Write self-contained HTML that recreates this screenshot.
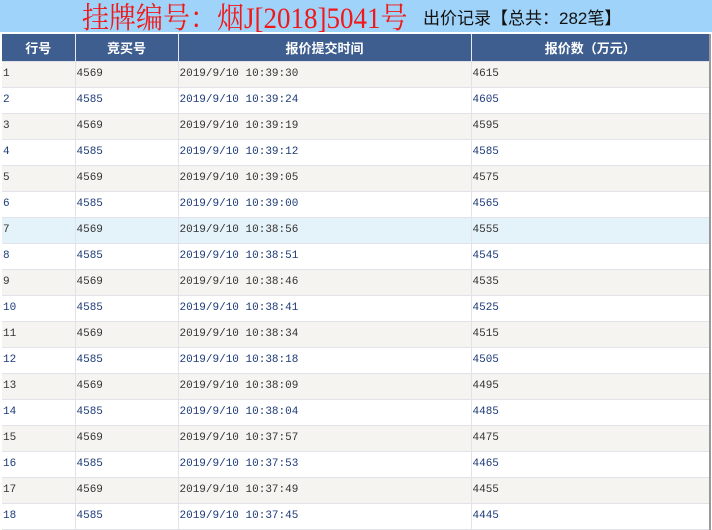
<!DOCTYPE html>
<html><head><meta charset="utf-8"><style>
*{margin:0;padding:0;box-sizing:border-box}
body{width:712px;height:525px;overflow:hidden;background:#fff;font-family:"Liberation Mono","Noto Sans CJK SC",monospace;}
.top{position:absolute;left:0;top:0;width:712px;height:32px;background:#9fd3f9;}
.t1{position:absolute;left:82px;top:1px;font-family:"Liberation Serif","Noto Serif CJK SC",serif;font-size:27px;color:#f01818;line-height:34px;white-space:nowrap;transform:scaleY(1.1);transform-origin:0 50%}
.t2{position:absolute;left:423px;top:8px;font-family:"Liberation Sans","Noto Sans CJK SC",sans-serif;font-size:17px;color:#111;line-height:22px;white-space:nowrap}
table{position:absolute;left:2px;top:34px;width:708px;border-collapse:collapse;table-layout:fixed;border-right:2px solid #999}
th{background:#3d5e8e;color:#fff;font-family:"Liberation Sans","Noto Sans CJK SC",sans-serif;font-size:13px;font-weight:bold;height:27px;border-right:1px solid #e8e8ee;border-bottom:1px solid #e0e0e6}
td{height:26px;font-size:11px;padding-left:1px;border-right:1px solid #e2e2ea;border-bottom:1px solid #e2e2ea;color:#333;white-space:nowrap}
tr.o td{background:#f5f4f0}
tr.e td{background:#fff;color:#1c3a78}
tr.h td{background:#e4f2f9;color:#333}
</style></head><body>
<div class="top"></div>
<div class="t1">挂牌编号：烟J[2018]5041号</div>
<div class="t2">出价记录【总共：282笔】</div>
<table>
<colgroup><col style="width:73px"><col style="width:103px"><col style="width:293px"><col style="width:239px"></colgroup>
<tr><th>行号</th><th>竞买号</th><th>报价提交时间</th><th>报价数（万元）</th></tr>
<tr class="o"><td>1</td><td>4569</td><td>2019/9/10 10:39:30</td><td>4615</td></tr>
<tr class="e"><td>2</td><td>4585</td><td>2019/9/10 10:39:24</td><td>4605</td></tr>
<tr class="o"><td>3</td><td>4569</td><td>2019/9/10 10:39:19</td><td>4595</td></tr>
<tr class="e"><td>4</td><td>4585</td><td>2019/9/10 10:39:12</td><td>4585</td></tr>
<tr class="o"><td>5</td><td>4569</td><td>2019/9/10 10:39:05</td><td>4575</td></tr>
<tr class="e"><td>6</td><td>4585</td><td>2019/9/10 10:39:00</td><td>4565</td></tr>
<tr class="h"><td>7</td><td>4569</td><td>2019/9/10 10:38:56</td><td>4555</td></tr>
<tr class="e"><td>8</td><td>4585</td><td>2019/9/10 10:38:51</td><td>4545</td></tr>
<tr class="o"><td>9</td><td>4569</td><td>2019/9/10 10:38:46</td><td>4535</td></tr>
<tr class="e"><td>10</td><td>4585</td><td>2019/9/10 10:38:41</td><td>4525</td></tr>
<tr class="o"><td>11</td><td>4569</td><td>2019/9/10 10:38:34</td><td>4515</td></tr>
<tr class="e"><td>12</td><td>4585</td><td>2019/9/10 10:38:18</td><td>4505</td></tr>
<tr class="o"><td>13</td><td>4569</td><td>2019/9/10 10:38:09</td><td>4495</td></tr>
<tr class="e"><td>14</td><td>4585</td><td>2019/9/10 10:38:04</td><td>4485</td></tr>
<tr class="o"><td>15</td><td>4569</td><td>2019/9/10 10:37:57</td><td>4475</td></tr>
<tr class="e"><td>16</td><td>4585</td><td>2019/9/10 10:37:53</td><td>4465</td></tr>
<tr class="o"><td>17</td><td>4569</td><td>2019/9/10 10:37:49</td><td>4455</td></tr>
<tr class="e"><td>18</td><td>4585</td><td>2019/9/10 10:37:45</td><td>4445</td></tr>
</table>
</body></html>
